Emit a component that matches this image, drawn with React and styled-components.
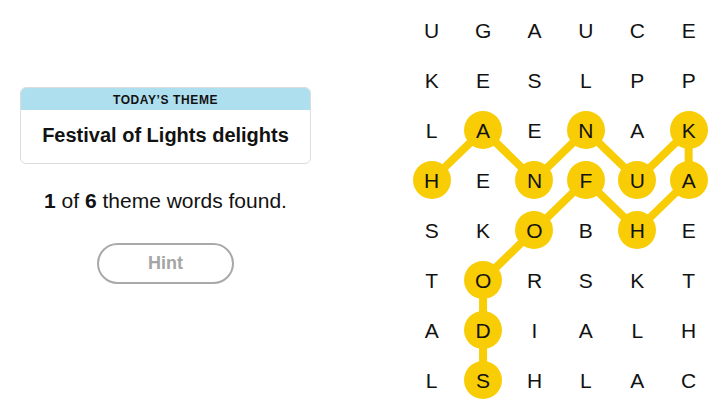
import React from "react";
import styled, { createGlobalStyle } from "styled-components";

const CELL_W = 51.4;
const CELL_H = 50;

const letters = [
  "UGAUCE",
  "KESLPP",
  "LAENAK",
  "HENFUA",
  "SKOBHE",
  "TORSKT",
  "ADIALH",
  "LSHLAC",
];

const path = [
  [3, 0], [2, 1], [3, 2], [2, 3], [3, 4], [2, 5], [3, 5],
  [4, 4], [3, 3], [4, 2], [5, 1], [6, 1], [7, 1],
];

const found = new Set(path.map(([r, c]) => `${r}-${c}`));

const App = () => {
  const points = path
    .map(([r, c]) => `${c * CELL_W + CELL_W / 2},${r * CELL_H + CELL_H / 2}`)
    .join(" ");

  return (
    <>
      <GlobalStyle />
      <Page>
        <Side>
          <ThemeCard>
            <ThemeHeader>Today’s Theme</ThemeHeader>
            <ThemeTitle>Festival of Lights delights</ThemeTitle>
          </ThemeCard>
          <Progress>
            <b>1</b> of <b>6</b> theme words found.
          </Progress>
          <HintButton>Hint</HintButton>
        </Side>
        <Board>
          <Lines viewBox={`0 0 ${CELL_W * 6} ${CELL_H * 8}`}>
            <polyline
              points={points}
              fill="none"
              stroke="#f8cd05"
              strokeWidth="8"
              strokeLinejoin="round"
            />
          </Lines>
          {letters.map((row, r) =>
            row.split("").map((ch, c) => (
              <Cell key={`${r}-${c}`}>
                <Letter active={found.has(`${r}-${c}`)}>{ch}</Letter>
              </Cell>
            ))
          )}
        </Board>
      </Page>
    </>
  );
};

export default App;

const GlobalStyle = createGlobalStyle`
  body {
    margin: 0;
    background: #fff;
    font-family: "Liberation Sans", Arial, sans-serif;
    color: #121212;
  }
`;

const Page = styled.div`
  width: 720px;
  height: 405px;
  display: flex;
  overflow: hidden;
`;

const Side = styled.div`
  width: 291px;
  padding: 87px 0 0 20px;
  display: flex;
  flex-direction: column;
  align-items: center;
`;

const ThemeCard = styled.div`
  width: 100%;
  box-sizing: border-box;
  border: 1px solid #dcdcdc;
  border-radius: 6px;
  overflow: hidden;
`;

const ThemeHeader = styled.div`
  height: 21px;
  background: #aedfee;
  display: flex;
  align-items: center;
  justify-content: center;
  font-size: 12px;
  font-weight: 700;
  letter-spacing: 0.6px;
  text-transform: uppercase;
  padding-top: 1px;
`;

const ThemeTitle = styled.div`
  height: 51px;
  display: flex;
  align-items: center;
  justify-content: center;
  font-size: 20px;
  font-weight: 700;
  padding-bottom: 2px;
`;

const Progress = styled.div`
  margin-top: 25px;
  font-size: 21px;
  line-height: 24px;

  b {
    font-weight: 700;
  }
`;

const HintButton = styled.button`
  margin-top: 30px;
  width: 137px;
  height: 41px;
  border: 2px solid #a9a9a9;
  border-radius: 21px;
  background: #fff;
  color: #a5a5a5;
  font-family: inherit;
  font-size: 18px;
  font-weight: 700;
`;

const Board = styled.div`
  position: relative;
  margin: 5px 0 0 95px;
  display: grid;
  grid-template-columns: repeat(6, ${CELL_W}px);
  grid-template-rows: repeat(8, ${CELL_H}px);
`;

const Lines = styled.svg`
  position: absolute;
  inset: 0;
  width: 100%;
  height: 100%;
`;

const Cell = styled.div`
  position: relative;
  display: flex;
  align-items: center;
  justify-content: center;
`;

const Letter = styled.div`
  width: 38px;
  height: 38px;
  border-radius: 50%;
  display: flex;
  align-items: center;
  justify-content: center;
  background: ${(props) => (props.active ? "#f8cd05" : "transparent")};
  font-size: 21px;
  line-height: 1;
  color: #121212;
`;
